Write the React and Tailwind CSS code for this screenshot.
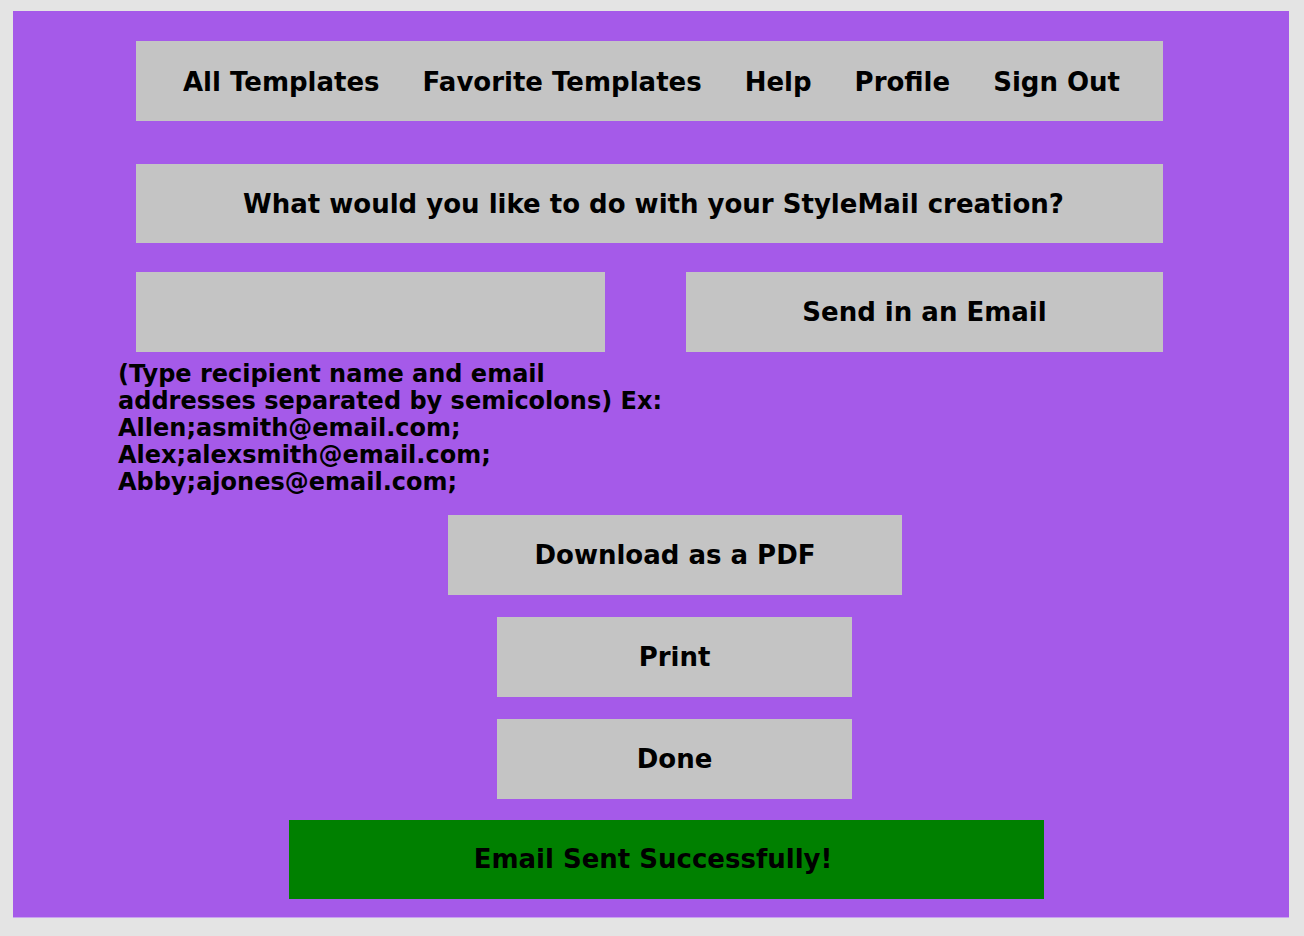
export default function App() {
  const font = { fontFamily: "'DejaVu Sans', 'Noto Sans', sans-serif" };
  const box = "flex items-center justify-center bg-[#c4c4c4] font-bold text-black";

  return (
    <div className="min-h-[936px] w-[1304px] bg-[#e4e4e4] pl-[13px] pt-[11px]" style={font}>
      <div className="flex h-[907px] w-[1276px] flex-col items-start border-b border-[#c9a3ef] bg-[#a55ae9]">
        <nav className={`${box} ml-[123px] mt-[30px] h-[80px] w-[1027px] gap-[43px] pl-[4px] pt-[2px] text-[26px]`}>
          <a>All Templates</a>
          <a>Favorite Templates</a>
          <a>Help</a>
          <a>Profile</a>
          <a>Sign Out</a>
        </nav>

        <div className={`${box} ml-[123px] mt-[43px] h-[79px] w-[1027px] pl-[8px] pt-[2px] text-[26px]`}>
          What would you like to do with your StyleMail creation?
        </div>

        <div className="ml-[123px] mt-[29px] flex gap-[81px]">
          <input className="h-[80px] w-[469px] bg-[#c4c4c4] px-3 text-[22px] outline-none" />
          <button className={`${box} h-[80px] w-[477px] text-[26px]`}>Send in an Email</button>
        </div>

        <p className="ml-[105px] mt-[9px] text-[24px] font-bold leading-[27px] text-black">
          (Type recipient name and email
          <br />
          addresses separated by semicolons) Ex:
          <br />
          Allen;asmith@email.com;
          <br />
          Alex;alexsmith@email.com;
          <br />
          Abby;ajones@email.com;
        </p>

        <button className={`${box} ml-[435px] mt-[19px] h-[80px] w-[454px] text-[26px]`}>Download as a PDF</button>
        <button className={`${box} ml-[484px] mt-[22px] h-[80px] w-[355px] text-[26px]`}>Print</button>
        <button className={`${box} ml-[484px] mt-[22px] h-[80px] w-[355px] text-[26px]`}>Done</button>

        <div className="ml-[276px] mt-[21px] flex h-[79px] w-[755px] items-center justify-center bg-[#008000] pr-[27px] text-[26px] font-bold text-black">
          Email Sent Successfully!
        </div>
      </div>
    </div>
  );
}
